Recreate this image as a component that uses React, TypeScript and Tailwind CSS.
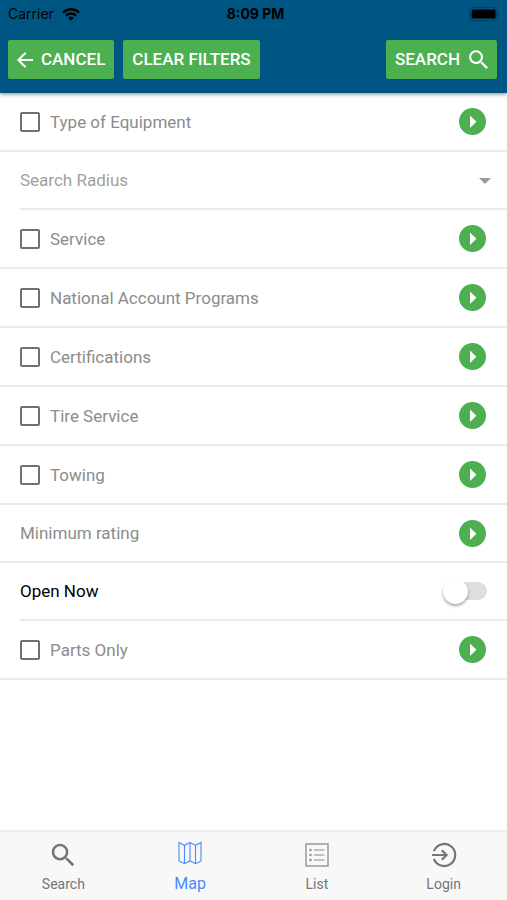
import React, { useState } from 'react';
import { IoMdArrowBack, IoMdSearch } from 'react-icons/io';

type Filter = {
  id: string;
  label: string;
  hasCheckbox: boolean;
};

const equipment: Filter = { id: 'equipment', label: 'Type of Equipment', hasCheckbox: true };
const partsOnly: Filter = { id: 'parts', label: 'Parts Only', hasCheckbox: true };

const filters: Filter[] = [
  { id: 'service', label: 'Service', hasCheckbox: true },
  { id: 'programs', label: 'National Account Programs', hasCheckbox: true },
  { id: 'certifications', label: 'Certifications', hasCheckbox: true },
  { id: 'tires', label: 'Tire Service', hasCheckbox: true },
  { id: 'towing', label: 'Towing', hasCheckbox: true },
  { id: 'rating', label: 'Minimum rating', hasCheckbox: false },
];

const WifiIcon = () => (
  <svg viewBox="0 0 18 13" className="w-[18px] h-[13px]" fill="none" stroke="currentColor" strokeWidth="2.4">
    <path d="M1 4.6a11.4 11.4 0 0 1 16 0" />
    <path d="M3.9 7.6a7.3 7.3 0 0 1 10.2 0" />
    <path d="M9 12.8 6.1 9.9a4.1 4.1 0 0 1 5.8 0z" fill="currentColor" stroke="none" />
  </svg>
);

const BatteryIcon = () => (
  <svg viewBox="0 0 30 14" className="w-[30px] h-[14px]">
    <rect x="0.5" y="0.5" width="27" height="13" rx="3.5" fill="none" stroke="#000" strokeOpacity="0.25" />
    <rect x="2.5" y="2.5" width="24" height="9" rx="1.5" fill="#000" />
    <path d="M28.5 4.5c1.6.6 1.6 4.4 0 5z" fill="#000" fillOpacity="0.35" />
  </svg>
);

const MapIcon = () => (
  <svg viewBox="0 0 24 24" className="size-6" fill="none" stroke="currentColor" strokeWidth="1.1">
    <path d="M1 1.5 6.500 4.3 12 1.500l5.500 2.800L23 1.500v18.400l-5.500 2.800-5.500-2.800-5.500 2.800L1 19.900z" />
    <path d="M6.500 4.300v18.400M12 1.500v18.400M17.500 4.300v18.400" />
  </svg>
);

const ListIcon = () => (
  <svg viewBox="0 0 24 24" className="size-6" fill="none" stroke="#8a8a8a">
    <rect x="1" y="1" width="22" height="22" strokeWidth="1.3" />
    <path d="M9 7h10.500M9 12h10.500M9 17h10.500" strokeWidth="1.2" />
    <g fill="#8a8a8a" stroke="none">
      <circle cx="5.500" cy="7" r="1.200" />
      <circle cx="5.500" cy="12" r="1.200" />
      <circle cx="5.500" cy="17" r="1.200" />
    </g>
  </svg>
);

const LoginIcon = () => (
  <svg viewBox="0 0 26 26" className="size-[26px]" fill="none" stroke="currentColor" strokeWidth="2.2">
    <path d="M2.900 9.200a11 11 0 1 1 0 7.600" />
    <path d="M1 13h14.500M10.800 8.200l4.800 4.800-4.800 4.800" />
  </svg>
);

const tabs = [
  { name: 'Search', icon: <IoMdSearch className="size-[30px]" /> },
  { name: 'Map', icon: <MapIcon /> },
  { name: 'List', icon: <ListIcon /> },
  { name: 'Login', icon: <LoginIcon /> },
];

const FilterRow: React.FC<{ filter: Filter }> = ({ filter }) => (
  <div
    className={
      filter.hasCheckbox
        ? 'flex items-center h-[59px] pl-5 pr-[21px] border-b-2 border-[#ebebeb] text-[#8c8c8c]'
        : 'flex items-center h-[58px] pl-5 pr-[21px] border-b-2 border-[#ebebeb] text-[#8c8c8c]'
    }
  >
    {filter.hasCheckbox ? (
      <label className="flex flex-1 items-center gap-[10px]">
        <input
          type="checkbox"
          className="appearance-none size-5 rounded-[2px] border-2 border-[#707070] checked:bg-[#4caf50]"
        />
        {filter.label}
      </label>
    ) : (
      <span className="flex-1">{filter.label}</span>
    )}
    <button
      aria-label={`Open ${filter.label}`}
      className="flex items-center justify-center size-[27px] rounded-full bg-[#4caf50]"
    >
      <svg viewBox="0 0 27 27" className="size-[27px]">
        <path d="M11 7.500v12.400l6.400-6.200z" fill="#fff" />
      </svg>
    </button>
  </div>
);

const App: React.FC = () => {
  const [activeTab, setActiveTab] = useState('Map');
  const [openNow, setOpenNow] = useState(false);

  return (
    <div className="flex flex-col min-h-screen bg-white text-[17px] leading-6 font-['Roboto',sans-serif]">
      {/* Header */}
      <header className="relative bg-[#005683] shadow-[0_1px_4px_rgba(0,0,0,0.5)]">
        <div className="grid grid-cols-3 items-center h-7 pl-2 pr-1 text-sm text-black font-['Inter',sans-serif]">
          <div className="flex items-center gap-2">
            <span>Carrier</span>
            <WifiIcon />
          </div>
          <span className="text-center font-bold">8:09 PM</span>
          <div className="flex justify-end pr-1">
            <BatteryIcon />
          </div>
        </div>
        <div className="flex gap-[9px] pt-3 pb-[14px] pl-2 pr-[10px] text-white font-medium">
          <button className="flex items-center gap-1 h-[39px] pl-[5px] pr-[9px] rounded-[2px] bg-[#4caf50]">
            <IoMdArrowBack className="size-6" />
            <span className="pb-[2px]">CANCEL</span>
          </button>
          <button className="h-[39px] px-[9px] rounded-[2px] bg-[#4caf50]">
            <span className="block pb-[2px]">CLEAR FILTERS</span>
          </button>
          <button className="flex items-center gap-[6px] h-[39px] pl-[9px] pr-[6px] ml-auto rounded-[2px] bg-[#4caf50]">
            <span className="pb-[2px]">SEARCH</span>
            <IoMdSearch className="size-[25px]" />
          </button>
        </div>
      </header>

      {/* Filters */}
      <main className="flex-1">
        <FilterRow filter={equipment} />
        <div className="relative ml-5 border-b-2 border-[#ebebeb]">
          <select
            aria-label="Search Radius"
            defaultValue=""
            className="block appearance-none w-full h-14 bg-transparent text-[#a0a0a0]"
          >
            <option value="">Search Radius</option>
            <option>10 miles</option>
            <option>25 miles</option>
            <option>50 miles</option>
          </select>
          <svg viewBox="0 0 12 6" className="absolute right-4 top-[26px] w-3 h-[6px] pointer-events-none">
            <path d="M0 0h12L6 6z" fill="#999" />
          </svg>
        </div>
        {filters.map((filter) => (
          <FilterRow key={filter.id} filter={filter} />
        ))}
        <label className="flex items-center justify-between h-[58px] ml-5 pr-5 border-b-2 border-[#ebebeb] text-black">
          Open Now
          <span className="relative flex items-center w-[44px] h-[26px]">
            <input
              type="checkbox"
              role="switch"
              checked={openNow}
              onChange={() => setOpenNow(!openNow)}
              className="peer appearance-none w-[36px] h-[18px] ml-2 rounded-full bg-[#dedede] checked:bg-[#a5d7a7]"
            />
            <span className="absolute left-0 size-[25px] rounded-full bg-white shadow-[0_2px_3px_rgba(0,0,0,0.35)] peer-checked:left-[19px]" />
          </span>
        </label>
        <FilterRow filter={partsOnly} />
      </main>

      {/* Tab bar */}
      <nav className="grid grid-cols-4 h-[70px] border-t-2 border-[#ececec] bg-[#f8f8f8]">
        {tabs.map((tab) => (
          <a
            key={tab.name}
            href={`#${tab.name.toLowerCase()}`}
            onClick={() => setActiveTab(tab.name)}
            className={
              tab.name === activeTab
                ? 'flex flex-col items-center gap-1 pt-[6px] text-base leading-6 text-[#488aff]'
                : 'flex flex-col items-center gap-[2px] pt-2 text-sm leading-6 text-[#757575]'
            }
          >
            <span className="flex items-center justify-center h-[30px]">{tab.icon}</span>
            {tab.name}
          </a>
        ))}
      </nav>
    </div>
  );
};

export default App;
